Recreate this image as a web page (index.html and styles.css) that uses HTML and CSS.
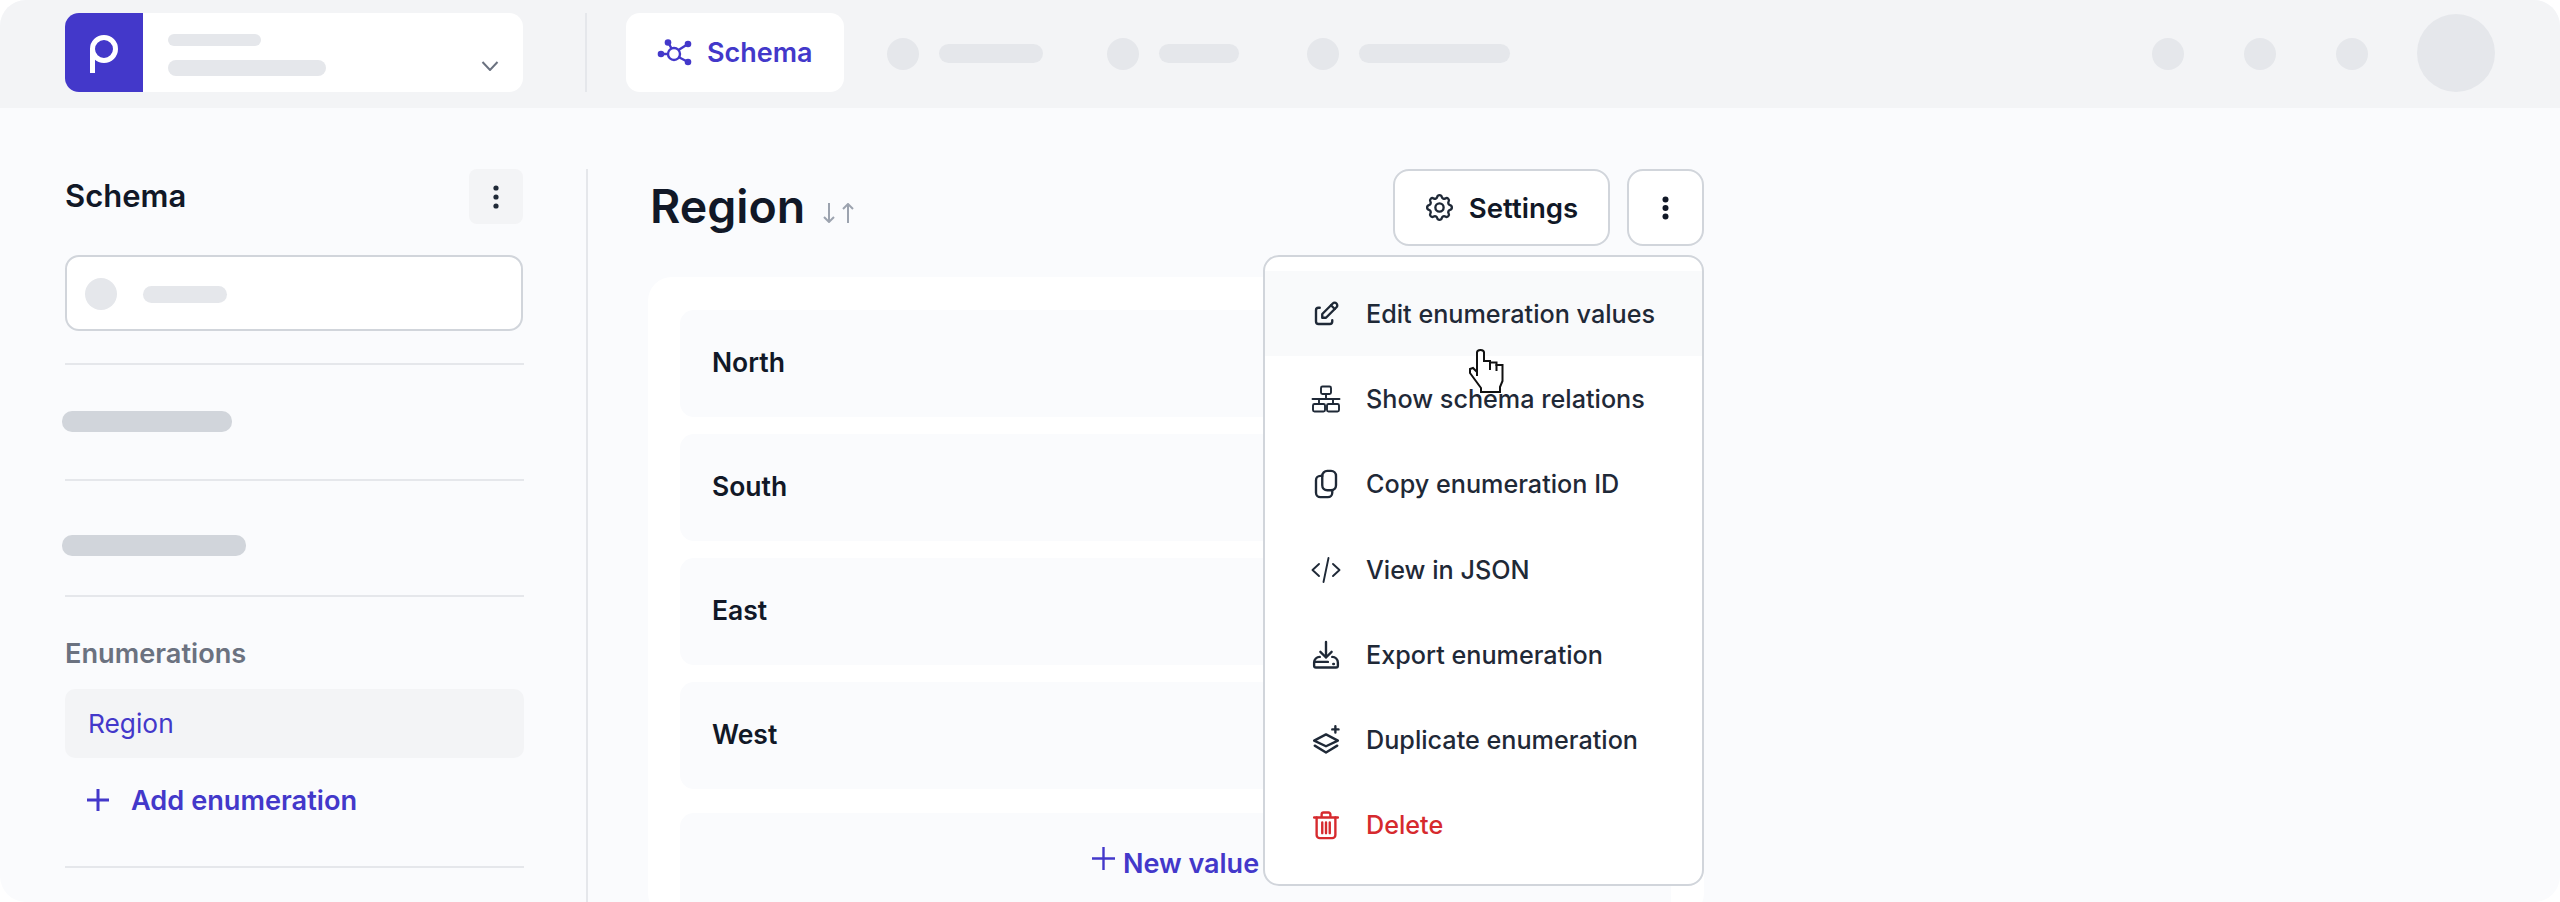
FILE: index.html
```html
<!DOCTYPE html>
<html>
<head>
    <title>Schema - Region</title>
    <link rel="stylesheet" href="styles.css">
</head>
<body>
    <div class="app">
        <header class="topbar">
            <div class="project-card">
                <div class="logo">
                    <svg width="30" height="38" viewBox="0 0 30 38" fill="none" stroke="#fff" stroke-width="5"><circle cx="15" cy="14" r="11.5"/><path d="M3.5 14v24"/></svg>
                </div>
                <div class="project-lines">
                    <div class="skel skel-name"></div>
                    <div class="skel skel-org"></div>
                </div>
                <svg class="chevron" width="18" height="10" viewBox="0 0 18 10" fill="none" stroke="#6b7280" stroke-width="2"><path d="M1.5 1l7.5 8 7.5-8"/></svg>
            </div>
            <div class="top-divider"></div>
            <div class="tab">
                <svg width="35" height="27" viewBox="0 0 35 27" fill="none" stroke="#4338ca" stroke-width="2.4"><circle cx="17" cy="15" r="6"/><path d="M4 15h7M11 3l3.500 6.500M31 5l-9.500 6M31 23l-9.500-5"/><g fill="#4338ca" stroke="none"><circle cx="4" cy="15" r="3.300"/><circle cx="11" cy="3.500" r="3.300"/><circle cx="31" cy="5" r="3.300"/><circle cx="31" cy="23" r="3.300"/></g></svg>
                <span>Schema</span>
            </div>
            <div class="tab-skels">
                <div class="skel-item"><div class="dot"></div><div class="skel bar-104"></div></div>
                <div class="skel-item"><div class="dot"></div><div class="skel bar-80"></div></div>
                <div class="skel-item push"><div class="dot"></div><div class="skel bar-151"></div></div>
            </div>
            <div class="top-right">
                <div class="dot"></div>
                <div class="dot"></div>
                <div class="dot"></div>
            </div>
            <div class="avatar"></div>
        </header>

        <div class="body">
            <aside class="sidebar">
                <div class="side-head">
                    <h2>Schema</h2>
                    <div class="side-menu">
                        <svg width="6" height="24" viewBox="0 0 6 24" fill="#1f2937"><circle cx="3" cy="3" r="2.6"/><circle cx="3" cy="12" r="2.6"/><circle cx="3" cy="21" r="2.6"/></svg>
                    </div>
                </div>
                <div class="search">
                    <div class="dot"></div>
                    <div class="skel bar-search"></div>
                </div>
                <div class="side-rule first"></div>
                <div class="skel side-bar bar-one"></div>
                <div class="side-rule after-one"></div>
                <div class="skel side-bar bar-two"></div>
                <div class="side-rule after-two"></div>
                <div class="side-label">Enumerations</div>
                <div class="side-item">Region</div>
                <div class="add-enum">
                    <svg width="22" height="22" viewBox="0 0 22 22" fill="none" stroke="#4338ca" stroke-width="3"><path d="M11 0v22M0 11h22"/></svg>
                    <span>Add enumeration</span>
                </div>
                <div class="side-rule last"></div>
            </aside>

            <main class="content">
                <div class="content-head">
                    <h1>Region</h1>
                    <svg class="sort" width="32" height="20" viewBox="0 0 32 20" fill="none" stroke="#9ca3af" stroke-width="2"><path d="M6 0v19M1 14l5 5 5-5M25 20V1M20 6l5-5 5 5"/></svg>
                    <div class="btn settings">
                        <svg width="33" height="33" viewBox="0 0 24 24" fill="none" stroke="#1f2937" stroke-width="1.7"><path d="M10.325 4.317c.426-1.756 2.924-1.756 3.35 0a1.724 1.724 0 0 0 2.573 1.066c1.543-.94 3.31.826 2.37 2.37a1.724 1.724 0 0 0 1.065 2.572c1.756.426 1.756 2.924 0 3.35a1.724 1.724 0 0 0-1.066 2.573c.94 1.543-.826 3.31-2.37 2.37a1.724 1.724 0 0 0-2.572 1.065c-.426 1.756-2.924 1.756-3.35 0a1.724 1.724 0 0 0-2.573-1.066c-1.543.94-3.31-.826-2.37-2.37a1.724 1.724 0 0 0-1.065-2.572c-1.756-.426-1.756-2.924 0-3.35a1.724 1.724 0 0 0 1.066-2.573c-.94-1.543.826-3.31 2.37-2.37 1 .608 2.296.07 2.572-1.065z"/><circle cx="12" cy="12" r="3"/></svg>
                        <span>Settings</span>
                    </div>
                    <div class="btn more">
                        <svg width="7" height="24" viewBox="0 0 7 24" fill="#111827"><circle cx="3.5" cy="3.5" r="3"/><circle cx="3.5" cy="12" r="3"/><circle cx="3.5" cy="20.5" r="3"/></svg>
                    </div>
                </div>

                <div class="values-card">
                    <div class="value-row">North</div>
                    <div class="value-row">South</div>
                    <div class="value-row">East</div>
                    <div class="value-row">West</div>
                    <div class="new-value">
                        <svg width="23" height="23" viewBox="0 0 23 23" fill="none" stroke="#4338ca" stroke-width="2.4"><path d="M11.500 0v23M0 11.500h23"/></svg>
                        <span>New value</span>
                    </div>
                </div>

                <div class="menu">
                    <div class="menu-item hovered">
                        <svg class="menu-icon" viewBox="0 0 24 24"><path d="M7 7H6a2 2 0 0 0-2 2v9a2 2 0 0 0 2 2h9a2 2 0 0 0 2-2v-1"/><path d="M20.385 6.585a2.1 2.1 0 0 0-2.97-2.97L9 12v3h3z"/><path d="M16 5l3 3"/></svg>
                        <span>Edit enumeration values</span>
                    </div>
                    <div class="menu-item">
                        <svg class="menu-icon" viewBox="0 0 30 30"><rect x="10" y="2.500" width="10" height="7.500" rx="1.500"/><path d="M15 10v5M1.500 15h27M8 15v5M22 15v5"/><rect x="2" y="20" width="12" height="7.500" rx="1.500"/><rect x="16" y="20" width="12" height="7.500" rx="1.500"/></svg>
                        <span>Show schema relations</span>
                    </div>
                    <div class="menu-item">
                        <svg class="menu-icon" viewBox="0 0 24 24"><rect x="9" y="1.500" width="11" height="15.500" rx="4"/><path d="M9 5.500H7.500a3.500 3.500 0 0 0-3.500 3.500v10a3.500 3.500 0 0 0 3.500 3.500h6a3.500 3.500 0 0 0 3.500-3.500v-2"/></svg>
                        <span>Copy enumeration ID</span>
                    </div>
                    <div class="menu-item">
                        <svg class="menu-icon" viewBox="0 0 30 30"><path d="M8 9l-6.500 6L8 21M22 9l6.500 6L22 21M17.500 3l-5 24"/></svg>
                        <span>View in JSON</span>
                    </div>
                    <div class="menu-item">
                        <svg class="menu-icon" viewBox="0 0 24 24"><path d="M12 1.500v12.500M7.500 9.500L12 14l4.500-4.500"/><path d="M7 13.500C4.500 13.500 2.500 15.500 2.500 18v2.500A1.500 1.500 0 0 0 4 22h16a1.500 1.500 0 0 0 1.500-1.500V18c0-2.500-2-4.500-4.500-4.500"/><path d="M3 17.500h10.500M17.800 19.200h.5"/></svg>
                        <span>Export enumeration</span>
                    </div>
                    <div class="menu-item">
                        <svg class="menu-icon" viewBox="0 0 24 24"><path d="M12 7.500L2.500 12.500 12 17l9.500-4.500-9.500-5z"/><path d="M3 16.500L12 22l9-5.500"/><path d="M19.500 1v5M17 3.500h5"/></svg>
                        <span>Duplicate enumeration</span>
                    </div>
                    <div class="menu-item danger">
                        <svg class="menu-icon" viewBox="0 0 24 24"><path d="M2.500 6h19M8.500 5.500V3.500a1.500 1.500 0 0 1 1.500-1.500h4a1.500 1.500 0 0 1 1.500 1.500v2"/><path d="M4.500 6v14a2.500 2.500 0 0 0 2.500 2.500h10a2.500 2.500 0 0 0 2.500-2.500V6"/><path d="M9 10v8.500M12 10v8.500M15 10v8.500"/></svg>
                        <span>Delete</span>
                    </div>
                </div>
            </main>
        </div>

        <svg class="cursor" width="36" height="44" viewBox="0 0 36 44" fill="#fff" stroke="#111" stroke-width="2"><path d="M8 27V3.500C8 1.500 9.500 1 11.500 1S15 1.500 15 3.500V12h6v1.500h6.500V16h6v16L31 38v5H12v-4L1 24v-4l3-1 4 4"/><path d="M21 13v8M27.500 15v7" fill="none"/></svg>
    </div>
</body>
</html>
```
FILE: styles.css
```css
* {
    box-sizing: border-box;
}
html, body {
    margin: 0;
    height: 100%;
    background: #fff;
    overflow: hidden;
}
body {
    font-family: Inter, "Liberation Sans", sans-serif;
    color: #111827;
}
svg {
    display: block;
    flex-shrink: 0;
}
.app {
    position: relative;
    width: 2560px;
    height: 902px;
    border-radius: 26px;
    overflow: hidden;
    background: #fafbfd;
}

/* top bar */
.topbar {
    display: flex;
    align-items: center;
    height: 108px;
    padding: 0 65px 3px;
    background: #f3f4f6;
}
.project-card {
    display: flex;
    width: 458px;
    height: 79px;
    background: #fff;
    border-radius: 14px;
    overflow: hidden;
    position: relative;
}
.logo {
    display: flex;
    justify-content: center;
    padding-top: 22px;
    width: 78px;
    background: #4338ca;
}
.project-lines {
    display: flex;
    flex-direction: column;
    padding: 21px 0 0 25px;
}
.skel {
    background: #e5e7eb;
    border-radius: 10px;
}
.skel-name {
    width: 93px;
    height: 12px;
}
.skel-org {
    width: 158px;
    height: 16px;
    margin-top: 14px;
}
.chevron {
    position: absolute;
    right: 24px;
    top: 48px;
}
.top-divider {
    width: 2px;
    height: 79px;
    margin: 0 39px 0 62px;
    background: #e5e7eb;
}
.tab {
    display: flex;
    align-items: center;
    gap: 15px;
    width: 218px;
    height: 79px;
    padding-left: 31px;
    background: #fff;
    border-radius: 14px;
    color: #4338ca;
    font-size: 27px;
    font-weight: 600;
}
.tab-skels {
    display: flex;
    align-items: center;
    gap: 64px;
    margin-left: 43px;
    padding-top: 2px;
}
.skel-item {
    display: flex;
    align-items: center;
    gap: 20px;
}
.skel-item.push {
    margin-left: 4px;
}
.dot {
    flex-shrink: 0;
    width: 32px;
    height: 32px;
    border-radius: 50%;
    background: #e5e7eb;
}
.bar-104 {
    width: 104px;
    height: 19px;
}
.bar-80 {
    width: 80px;
    height: 19px;
}
.bar-151 {
    width: 151px;
    height: 19px;
}
.top-right {
    display: flex;
    gap: 60px;
    margin-left: auto;
    padding-top: 2px;
}
.avatar {
    width: 78px;
    height: 78px;
    margin-left: 49px;
    border-radius: 50%;
    background: #e5e7eb;
}

/* sidebar */
.body {
    display: flex;
    padding: 61px 0 0 65px;
}
.sidebar {
    width: 459px;
    flex-shrink: 0;
}
.side-head {
    display: flex;
    align-items: center;
    justify-content: space-between;
    width: 458px;
    height: 55px;
}
.side-head h2 {
    margin: 0 0 2px;
    font-size: 31px;
    font-weight: 600;
}
.side-menu {
    display: flex;
    align-items: center;
    justify-content: center;
    width: 54px;
    height: 55px;
    background: #f3f4f6;
    border-radius: 8px;
}
.search {
    display: flex;
    align-items: center;
    gap: 26px;
    width: 458px;
    height: 76px;
    margin-top: 31px;
    padding: 2px 0 0 18px;
    background: #fff;
    border: 2px solid #d1d5db;
    border-radius: 14px;
}
.bar-search {
    width: 84px;
    height: 17px;
}
.side-rule {
    height: 2px;
    background: #e5e7eb;
}
.side-rule.first {
    margin-top: 32px;
}
.side-rule.after-one {
    margin-top: 47px;
}
.side-rule.after-two {
    margin-top: 39px;
}
.side-rule.last {
    margin-top: 48px;
}
.side-bar {
    height: 21px;
    margin-left: -3px;
    background: #d1d5db;
}
.bar-one {
    width: 170px;
    margin-top: 46px;
}
.bar-two {
    width: 184px;
    margin-top: 54px;
}
.side-label {
    margin-top: 39px;
    font-size: 27.2px;
    font-weight: 600;
    line-height: 36px;
    color: #6b7280;
}
.side-item {
    display: flex;
    align-items: center;
    height: 69px;
    margin-top: 17px;
    padding-left: 23px;
    background: #f3f4f6;
    border-radius: 10px;
    color: #4338ca;
    font-size: 26.3px;
}
.add-enum {
    display: flex;
    align-items: center;
    gap: 22px;
    height: 36px;
    margin-top: 24px;
    padding-left: 22px;
    color: #4338ca;
    font-size: 27.2px;
    font-weight: 600;
}

/* main column */
.content {
    position: relative;
    width: 1120px;
    margin-left: 62px;
    padding-left: 60px;
    border-left: 2px solid #e5e7eb;
    height: 733px;
}
.content-head {
    display: flex;
    align-items: center;
    height: 77px;
    width: 1056px;
}
.content-head h1 {
    margin: 0 0 3px 2px;
    font-size: 46.5px;
    font-weight: 600;
}
.sort {
    margin: 10px 0 0 18px;
}
.btn {
    display: flex;
    align-items: center;
    justify-content: center;
    height: 77px;
    background: #fff;
    border: 2px solid #d1d5db;
    border-radius: 16px;
}
.settings {
    gap: 13px;
    width: 217px;
    margin-left: auto;
    padding-right: 2px;
    font-size: 27.6px;
    font-weight: 600;
}
.more {
    width: 77px;
    margin: 0 0 0 17px;
}
.values-card {
    width: 1056px;
    margin-top: 31px;
    padding: 33px 33px 0 32px;
    height: 640px;
    background: #fff;
    border-radius: 24px;
}
.value-row {
    display: flex;
    align-items: center;
    height: 107px;
    margin-bottom: 17px;
    padding: 0 0 3px 32px;
    background: #fafbfd;
    border-radius: 14px;
    font-size: 26.5px;
    font-weight: 600;
}
.new-value {
    display: flex;
    justify-content: center;
    gap: 8px;
    height: 120px;
    margin-top: 24px;
    padding-top: 34px;
    background: #fafbfd;
    border-radius: 14px;
    color: #4338ca;
    font-size: 27px;
    font-weight: 600;
}

/* dropdown */
.menu {
    position: absolute;
    top: 86px;
    left: 675px;
    width: 441px;
    height: 631px;
    padding: 14px 0;
    background: #fff;
    border: 2px solid #d1d5db;
    border-radius: 16px;
}
.menu-item {
    display: flex;
    align-items: center;
    height: 85.3px;
    padding-left: 46px;
    gap: 25px;
    color: #1f2937;
    font-size: 25.2px;
    font-weight: 500;
}
.menu-item.hovered {
    background: #f9fafb;
}
.menu-item.danger {
    color: #d62a2e;
}
.menu-icon {
    width: 30px;
    height: 30px;
    fill: none;
    stroke: currentColor;
    stroke-width: 1.9;
    stroke-linecap: round;
    stroke-linejoin: round;
}
.cursor {
    position: absolute;
    top: 349px;
    left: 1469px;
}
```
